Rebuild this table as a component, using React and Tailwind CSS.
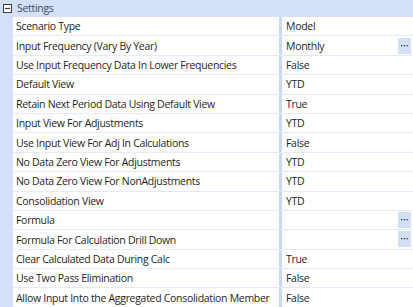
const rows = [
  { label: 'Scenario Type', value: 'Model' },
  { label: 'Input Frequency (Vary By Year)', value: 'Monthly', more: true },
  { label: 'Use Input Frequency Data In Lower Frequencies', value: 'False' },
  { label: 'Default View', value: 'YTD' },
  { label: 'Retain Next Period Data Using Default View', value: 'True' },
  { label: 'Input View For Adjustments', value: 'YTD' },
  { label: 'Use Input View For Adj In Calculations', value: 'False' },
  { label: 'No Data Zero View For Adjustments', value: 'YTD' },
  { label: 'No Data Zero View For NonAdjustments', value: 'YTD' },
  { label: 'Consolidation View', value: 'YTD' },
  { label: 'Formula', value: '', more: true },
  { label: 'Formula For Calculation Drill Down', value: '', more: true },
  { label: 'Clear Calculated Data During Calc', value: 'True' },
  { label: 'Use Two Pass Elimination', value: 'False' },
  { label: 'Allow Input Into the Aggregated Consolidation Member', value: 'False' },
];

const MinusBox = () => (
  <svg width="9" height="9" viewBox="0 0 9 9" className="shrink-0">
    <rect x="0.5" y="0.5" width="8" height="8" fill="#fff" stroke="#3c3c3c" />
    <path d="M2 4.5h5" stroke="#3c3c3c" strokeWidth="1.2" />
  </svg>
);

const MoreButton = () => (
  <div className="w-[13px] h-[16px] bg-[#d2def4] flex items-center justify-center">
    <svg width="7" height="2" viewBox="0 0 7 2">
      <rect x="0" y="0" width="1.3" height="1.3" fill="#2d3a55" />
      <rect x="2.8" y="0" width="1.3" height="1.3" fill="#2d3a55" />
      <rect x="5.6" y="0" width="1.3" height="1.3" fill="#2d3a55" />
    </svg>
  </div>
);

export default function App() {
  return (
    <div
      className="w-[413px] h-[307px] overflow-hidden bg-white text-[10.5px] tracking-[-0.3px] text-[#1e1e1e]"
      style={{ fontFamily: '"Open Sans", sans-serif' }}
    >
      <div className="h-[17px] bg-[#d4e0f5] flex items-center gap-[5px] pl-[3px] text-[#3a4a6a]">
        <MinusBox />
        <span className="leading-none">Settings</span>
      </div>
      <div className="flex">
        <div className="w-[13px] bg-[#d4e0f5] shrink-0" />
        <div className="flex-1">
          {rows.map(r => (
            <div key={r.label} className="flex h-[19.4px] border-b-[1.5px] border-[#e3ebf8]">
              <div className="w-[266px] pl-[3px] pt-[2px] flex items-center whitespace-nowrap overflow-hidden">
                {r.label}
              </div>
              <div className="w-[3px] bg-[#cad8f0] shrink-0" />
              <div className="flex-1 pl-[4px] pr-[2px] flex items-center justify-between">
                <span className="pt-[2px]">{r.value}</span>
                {r.more && <MoreButton />}
              </div>
            </div>
          ))}
        </div>
      </div>
    </div>
  );
}
